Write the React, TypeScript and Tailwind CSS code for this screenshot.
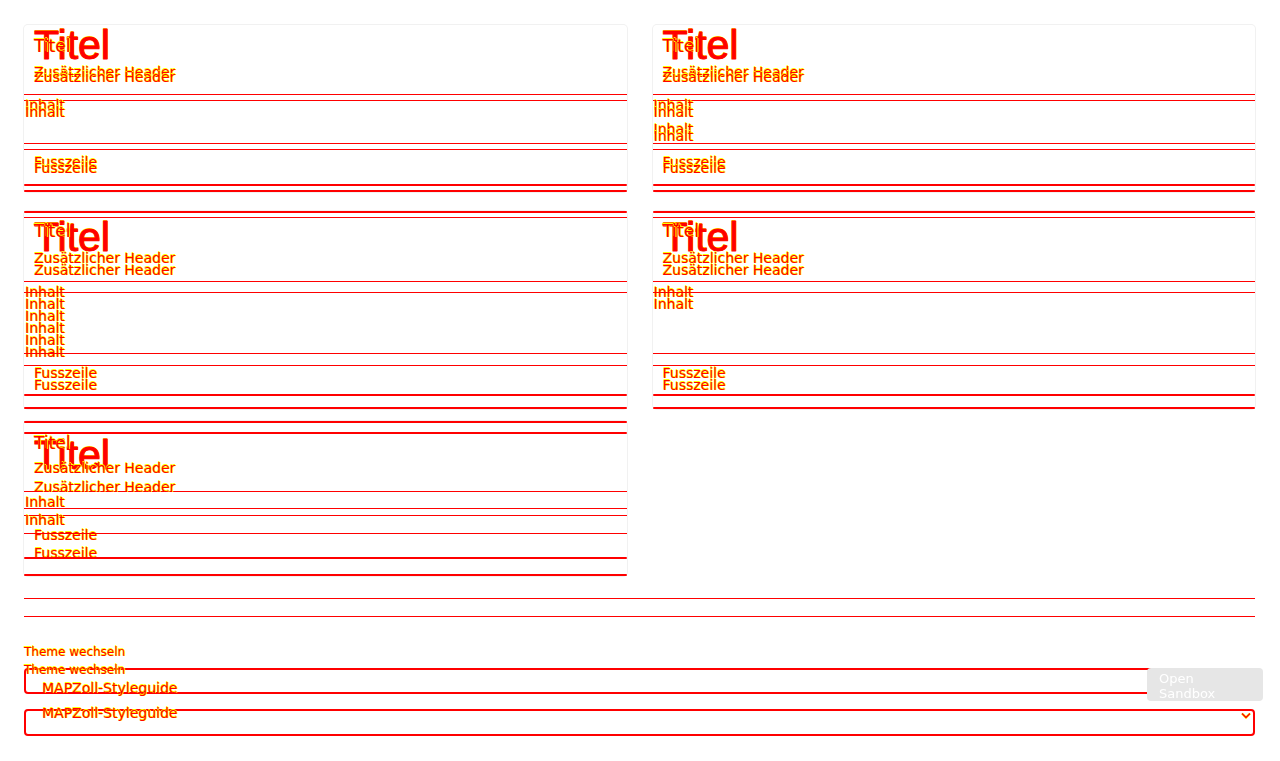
import type { ReactNode } from 'react';

// red glyphs with the thin yellow fringe seen all over the reference
const ink = 'whitespace-nowrap text-[#ff0000] [text-shadow:1px_0_0_#ffff00,0_-1px_0_#ffff00]';
const sans = "font-['DejaVu_Sans',sans-serif]";

const Line = () => <div className="h-px bg-[#ff0000]" />;
const Thick = () => <div className="h-[2px] rounded-[2px] bg-[#ff0000]" />;
const Gap = ({ className }: { className: string }) => <div className={className} />;

type RowProps = { className: string; flush?: boolean; children: ReactNode };

const Row = ({ className, flush = false, children }: RowProps) => (
  <div className={`${className} ${flush ? 'pl-[1px]' : 'pl-[10px]'} ${ink} ${sans} text-[14px] leading-[10px]`}>
    {children}
  </div>
);

type HeadProps = { small: string; big: string; first: string; second: string };

const Head = ({ small, big, first, second }: HeadProps) => (
  <div className="relative">
    <div
      className={`${big} pl-[10px] ${ink} font-['Liberation_Sans',Arial,sans-serif] text-[41px] leading-[30px] [-webkit-text-stroke:1px_#ff0000]`}
    >
      Titel
    </div>
    <div className={`absolute left-[10px] ${small} ${ink} ${sans} text-[17px] leading-[12px]`}>Titel</div>
    <Row className={first}>Zusätzlicher Header</Row>
    <Row className={second}>Zusätzlicher Header</Row>
  </div>
);

const Card = ({ className = '', children }: { className?: string; children: ReactNode }) => (
  <div className={`flex flex-col rounded-[4px] bg-white ring-1 ring-[#f1f1f1] ${className}`}>{children}</div>
);

const FirstCard = ({ twice }: { twice: boolean }) => (
  <Card className="pt-[5px]">
    <Head small="top-[10px]" big="h-[37px]" first="h-[5px]" second="h-[22px]" />
    <Line />
    <Gap className="h-[5px]" />
    <Line />
    <Row flush className="-mt-px h-[7px]">Inhalt</Row>
    {twice ? (
      <>
        <Row flush className="h-[17px]">Inhalt</Row>
        <Row flush className="h-[7px]">Inhalt</Row>
        <Row flush className="h-[12px]">Inhalt</Row>
      </>
    ) : (
      <Row flush className="h-[36px]">Inhalt</Row>
    )}
    <Line />
    <Gap className="h-[5px]" />
    <Line />
    <Gap className="h-[7px]" />
    <Row className="h-[6px]">Fusszeile</Row>
    <Row className="h-[21px]">Fusszeile</Row>
    <Thick />
    <Gap className="h-[4px]" />
    <Thick />
  </Card>
);

const SecondCard = ({ many }: { many: boolean }) => (
  <Card>
    <Thick />
    <Gap className="h-[4px]" />
    <Line />
    <Gap className="h-[4px]" />
    <Head small="top-[3px]" big="h-[31px]" first="h-[12px]" second="h-[16px]" />
    <Line />
    <Gap className="h-[5px]" />
    <Row flush className="h-[5px]">Inhalt</Row>
    <Line />
    <Gap className="h-[6px]" />
    {many ? (
      <>
        <Row flush className="h-[12px]">Inhalt</Row>
        <Row flush className="h-[12px]">Inhalt</Row>
        <Row flush className="h-[12px]">Inhalt</Row>
        <Row flush className="h-[12px]">Inhalt</Row>
        <Row flush className="h-[6px]">Inhalt</Row>
      </>
    ) : (
      <Row flush className="h-[54px]">Inhalt</Row>
    )}
    <Line />
    <Gap className="h-[11px]" />
    <Line />
    <Gap className="h-[2px]" />
    <Row className="h-[12px]">Fusszeile</Row>
    <Row className="h-[14px]">Fusszeile</Row>
    <Thick />
    <Gap className="h-[11px]" />
    <Thick />
  </Card>
);

const ThirdCard = () => (
  <Card>
    <Thick />
    <Gap className="h-[9px]" />
    <Thick />
    <Gap className="h-[6px]" />
    <Head small="-top-[3px]" big="h-[23px]" first="h-[19px]" second="h-[9px]" />
    <Line />
    <Gap className="h-[5px]" />
    <Row flush className="h-[11px]">Inhalt</Row>
    <Line />
    <Gap className="h-[6px]" />
    <Line />
    <Row flush className="-mt-px h-[15px]">Inhalt</Row>
    <Row className="h-[3px]">Fusszeile</Row>
    <Line />
    <Gap className="h-[14px]" />
    <Row className="h-[9px]">Fusszeile</Row>
    <Thick />
    <Gap className="h-[15px]" />
    <Thick />
  </Card>
);

const Chevron = () => (
  <svg width="10" height="7" viewBox="0 0 10 7" className="absolute right-[2px] top-px">
    <path d="M1 1.5 L5 5.5 L9 1.5" fill="none" stroke="#ffff00" strokeWidth="2.4" />
    <path d="M1 1.5 L5 5.5 L9 1.5" fill="none" stroke="#ff0000" strokeWidth="1.4" />
  </svg>
);

export default function App() {
  return (
    <div className="min-h-[761px] bg-white pl-[24px] pr-[25px] pt-[25px]">
      <div className="grid grid-cols-2 gap-x-[26px]">
        <FirstCard twice={false} />
        <FirstCard twice />
      </div>
      <div className="mt-[19px] grid grid-cols-2 gap-x-[26px]">
        <SecondCard many />
        <SecondCard many={false} />
      </div>
      <div className="mt-[12px] grid grid-cols-2 gap-x-[26px]">
        <ThirdCard />
      </div>

      <div className="mt-[22px]">
        <Line />
        <Gap className="h-[17px]" />
        <Line />
        <Gap className="h-[30px]" />
        <div className={`h-[18px] ${ink} ${sans} text-[12px] leading-[10px]`}>Theme wechseln</div>
        <div className={`h-[3px] ${ink} ${sans} text-[12px] leading-[10px]`}>Theme wechseln</div>
        <div className="h-[26px] rounded-[4px] border-2 border-[#ff0000] pl-[16px] pt-[13px]">
          <div className={`${ink} ${sans} text-[14px] leading-[10px]`}>MAPZoll-Styleguide</div>
        </div>
        <div className="relative mt-[15px] h-[27px] rounded-[4px] border-2 border-[#ff0000] pl-[16px]">
          <div className={`-mt-[3px] ${ink} ${sans} text-[14px] leading-[10px]`}>MAPZoll-Styleguide</div>
          <Chevron />
        </div>
      </div>

      <button
        type="button"
        className={`fixed bottom-[60px] right-[17px] h-[33px] w-[116px] rounded-[4px] bg-[#e6e6e6] px-[12px] pt-[2px] text-left ${sans} text-[13px] leading-[15px] text-white`}
      >
        Open Sandbox
      </button>
    </div>
  );
}
